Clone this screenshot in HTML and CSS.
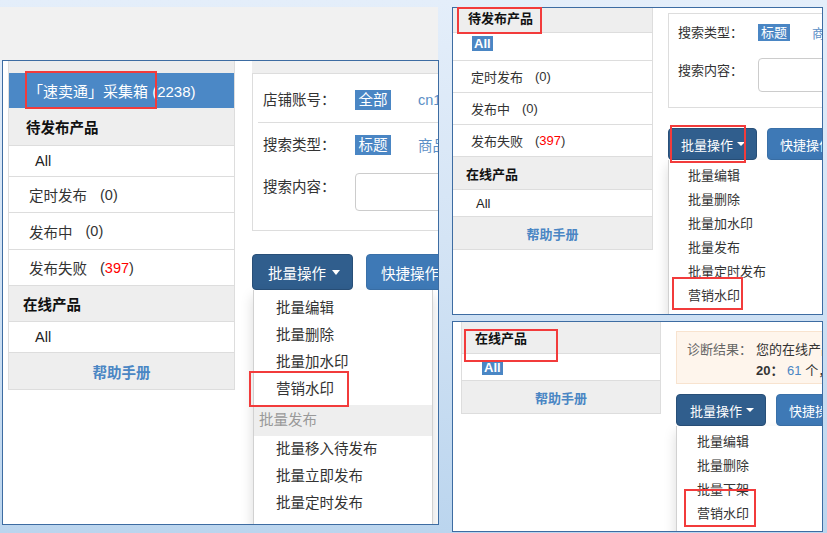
FILE: index.html
```html
<!DOCTYPE html>
<html lang="zh-CN">
<head>
<meta charset="utf-8">
<title>速卖通 采集箱 营销水印</title>
<link rel="stylesheet" href="styles.css">
</head>
<body>
<div class="a-backdrop"></div>

<section class="shot shot-a">
  <aside class="sb">
    <div class="sb-cap"></div>
    <div class="sb-row sb-active">「速卖通」采集箱 (2238)</div>
    <div class="sb-row sb-head">待发布产品</div>
    <div class="sb-row sb-all"><span class="all-txt">All</span></div>
    <div class="sb-row sb-item">定时发布<span class="cnt">(0)</span></div>
    <div class="sb-row sb-item sb-item-b">发布中<span class="cnt">(0)</span></div>
    <div class="sb-row sb-item">发布失败<span class="cnt">(<span class="red">397</span>)</span></div>
    <div class="sb-row sb-head sb-head-2">在线产品</div>
    <div class="sb-row sb-all"><span class="all-txt">All</span></div>
    <div class="sb-row sb-help">帮助手册</div>
  </aside>
  <main class="main">
    <div class="m-cap"></div>
    <div class="filter">
      <div class="f-row f-shop"><span class="f-label">店铺账号：</span><span class="tag">全部</span><span class="opt">cn1</span></div>
      <div class="f-row f-type"><span class="f-label">搜索类型：</span><span class="tag">标题</span><span class="opt">商品</span></div>
      <div class="f-row f-search"><span class="f-label">搜索内容：</span><span class="input"></span></div>
    </div>
    <div class="btns">
      <span class="btn btn-dark">批量操作<i class="caret"></i></span>
      <span class="btn btn-light">快捷操作</span>
    </div>
    <ul class="menu">
      <li>批量编辑</li>
      <li>批量删除</li>
      <li>批量加水印</li>
      <li>营销水印</li>
      <li class="menu-head">批量发布</li>
      <li>批量移入待发布</li>
      <li>批量立即发布</li>
      <li>批量定时发布</li>
    </ul>
  </main>
</section>

<section class="shot shot-b">
  <aside class="sb">
    <div class="sb-row sb-head sb-head-top">待发布产品</div>
    <div class="sb-row sb-all"><span class="all-tag">All</span></div>
    <div class="sb-row sb-item">定时发布<span class="cnt">(0)</span></div>
    <div class="sb-row sb-item">发布中<span class="cnt">(0)</span></div>
    <div class="sb-row sb-item">发布失败<span class="cnt">(<span class="red">397</span>)</span></div>
    <div class="sb-row sb-head sb-head-2">在线产品</div>
    <div class="sb-row sb-all sb-all-plain"><span class="all-txt">All</span></div>
    <div class="sb-row sb-help">帮助手册</div>
  </aside>
  <main class="main">
    <div class="filter">
      <div class="f-row f-type"><span class="f-label">搜索类型：</span><span class="tag">标题</span><span class="opt">商品</span></div>
      <div class="f-row f-search"><span class="f-label">搜索内容：</span><span class="input"></span></div>
    </div>
    <div class="btns">
      <span class="btn btn-dark">批量操作<i class="caret"></i></span>
      <span class="btn btn-light">快捷操作</span>
    </div>
    <ul class="menu">
      <li>批量编辑</li>
      <li>批量删除</li>
      <li>批量加水印</li>
      <li>批量发布</li>
      <li>批量定时发布</li>
      <li>营销水印</li>
    </ul>
  </main>
</section>

<section class="shot shot-c">
  <aside class="sb">
    <div class="sb-row sb-head">在线产品</div>
    <div class="sb-row sb-all"><span class="all-tag">All</span></div>
    <div class="sb-row sb-help">帮助手册</div>
  </aside>
  <main class="main">
    <div class="notice">
      <span class="n-label">诊断结果：</span>
      <span class="n-text">您的在线产品中，有</span>
      <span></span>
      <span class="n-text"><b>20：</b> <span class="blue">61</span> 个，</span>
    </div>
    <div class="btns">
      <span class="btn btn-dark">批量操作<i class="caret"></i></span>
      <span class="btn btn-light">快捷操作</span>
    </div>
    <ul class="menu">
      <li>批量编辑</li>
      <li>批量删除</li>
      <li>批量下架</li>
      <li>营销水印</li>
    </ul>
  </main>
</section>

<div class="mark mark-1"></div>
<div class="mark mark-2"></div>
<div class="mark mark-3"></div>
<div class="mark mark-4"></div>
<div class="mark mark-5"></div>
<div class="mark mark-6"></div>
<div class="mark mark-7"></div>
</body>
</html>
```

FILE: styles.css
```css
* { box-sizing: border-box; margin: 0; padding: 0; }
html, body { width: 827px; height: 533px; overflow: hidden; }
body {
  position: relative;
  font-family: "Liberation Sans", "Noto Sans CJK SC", sans-serif;
  color: #333;
  background: linear-gradient(180deg, #e4eefa 0%, #d4e4f5 45%, #bbd5ee 100%);
}
ul { list-style: none; }

.a-backdrop { position: absolute; left: 0; top: 7px; width: 438px; height: 53px; background: #f1f1f1; }

/* screenshot windows */
.shot {
  position: absolute;
  display: flex;
  align-items: flex-start;
  background: #fff;
  border: 1px solid #3d6ca2;
  overflow: hidden;
}
.shot-a { left: 2px; top: 60px; width: 437px; height: 465px; font-size: 14.5px; }
.shot-b { left: 452px; top: 7px; width: 371px; height: 308px; font-size: 13px; }
.shot-c { left: 452px; top: 321px; width: 371px; height: 211px; font-size: 13px; }

/* sidebar */
.sb { flex: none; display: flex; flex-direction: column; border-right: 1px solid #ddd; border-bottom: 1px solid #ddd; }
.sb-row { display: flex; align-items: center; border-bottom: 1px solid #ddd; white-space: nowrap; }
.sb-head { background: #eee; font-weight: bold; color: #111; }
.sb-item { color: #333; }
.sb-all { color: #222; }
.sb-help { justify-content: center; background: #eee; color: #4a86c4; font-weight: bold; border-bottom: none; }
.cnt { margin-left: 12px; }
.red { color: #f00; }
.blue { color: #4a86c4; }
.all-tag { background: #4a86c4; color: #fff; font-weight: bold; padding: 0 2px; }

.shot-a .sb { margin-left: 5px; width: 227px; border-left: 1px solid #ddd; }
.shot-a .sb-cap { height: 12px; background: #ececec; }
.shot-a .sb-active { height: 35px; border-bottom: none; background: #4b88c6; color: #fff; font-size: 15px; padding-left: 19px; }
.shot-a .sb-head { height: 38px; padding-left: 17px; }
.shot-a .sb-head-2 { height: 36px; padding-left: 14px; }
.shot-a .sb-all { height: 31px; padding-left: 26px; }
.shot-a .sb-item { height: 36px; padding-left: 20px; }
.shot-a .sb-item-b { height: 37px; }
.shot-a .sb-help { height: 36px; }
.shot-a .cnt { margin-left: 13px; }

.shot-b .sb { width: 200px; }
.shot-b .sb-head-top { height: 25px; padding-left: 15px; padding-bottom: 5px; }
.shot-b .sb-head-2 { height: 33px; padding-left: 13px; }
.shot-b .sb-all { height: 28px; padding-left: 19px; align-items: flex-start; padding-top: 3px; }
.shot-b .sb-all-plain { height: 27px; padding-left: 23px; align-items: center; padding-top: 0; }
.shot-b .sb-item { height: 32px; padding-left: 18px; }
.shot-b .sb-help { height: 32px; }

.shot-c .sb { margin-left: 8px; width: 200px; border-left: 1px solid #ddd; }
.shot-c .sb-head { height: 32px; padding-left: 13px; }
.shot-c .sb-all { height: 27px; padding-left: 20px; }
.shot-c .sb-help { height: 32px; }

/* main area */
.main { flex: none; width: 300px; display: flex; flex-direction: column; align-items: flex-start; }
.shot-a .main { margin-left: 17px; }
.shot-b .main, .shot-c .main { margin-left: 15px; }

.m-cap { align-self: stretch; height: 12px; background: #efefef; }

.filter { align-self: stretch; border: 1px solid #ddd; border-right: none; display: flex; flex-direction: column; }
.f-row { display: flex; align-items: center; white-space: nowrap; }
.f-label { flex: none; color: #333; }
.tag { background: #4a86c4; color: #fff; }
.opt { color: #5b8fc6; }
.input { flex: none; width: 200px; border: 1px solid #ccc; border-radius: 4px; background: #fff; }

.shot-a .filter { height: 158px; }
.shot-a .f-shop { height: 49px; margin-left: 5px; padding-left: 5px; padding-top: 3px; border-bottom: 1px solid #ddd; }
.shot-a .f-type { height: 43px; padding-left: 10px; }
.shot-a .f-search { padding-left: 10px; padding-top: 7px; align-items: flex-start; }
.shot-a .f-label { width: 92px; line-height: 20px; }
.shot-a .f-search .f-label { margin-top: 4px; }
.shot-a .tag { line-height: 20px; padding: 0 3.5px; }
.shot-a .opt { margin-left: 27px; }
.shot-a .input { height: 38px; }

.shot-b .filter { margin-top: 5px; height: 95px; }
.shot-b .f-type { height: 37px; padding-left: 9px; }
.shot-b .f-search { padding-left: 9px; padding-top: 7px; align-items: flex-start; }
.shot-b .f-label { width: 80px; line-height: 18px; }
.shot-b .f-search .f-label { margin-top: 4px; }
.shot-b .tag { line-height: 17px; padding: 0 3px; }
.shot-b .opt { margin-left: 22px; }
.shot-b .input { height: 34px; }

/* notice */
.notice {
  align-self: stretch;
  margin-top: 9px;
  height: 53px;
  background: #fef5ec;
  border: 1px solid #f8e3cf;
  border-right: none;
  padding: 9px 0 0 10px;
  display: grid;
  grid-template-columns: 69px auto;
  line-height: 17px;
  white-space: nowrap;
}
.n-label { color: #666; }
.n-text { color: #333; }
.n-text b { color: #333; }

/* buttons */
.btns { display: flex; white-space: nowrap; }
.btn { display: flex; align-items: center; color: #fff; border-radius: 4px; }
.btn-dark { background: #305e8d; border: 1px solid #284f78; }
.btn-light { background: #3e79b6; border: 1px solid #3a70a8; width: 120px; }
.caret { display: inline-block; width: 0; height: 0; border-left: 4px solid transparent; border-right: 4px solid transparent; border-top: 5px solid #fff; }

.shot-a .btns { margin-top: 23px; height: 36px; gap: 13px; }
.shot-a .btn { height: 36px; padding-left: 15px; }
.shot-a .btn-dark { width: 101px; }
.shot-a .btn-light { padding-left: 14px; }
.shot-a .caret { margin-left: 6px; border-left-width: 4.5px; border-right-width: 4.5px; }

.shot-b .btns { margin-top: 20px; height: 32px; gap: 10px; }
.shot-c .btns { margin-top: 10px; height: 32px; gap: 10px; }
.shot-b .btn, .shot-c .btn { height: 32px; padding-left: 12px; }
.shot-b .btn-dark { width: 89px; }
.shot-c .btn-dark { width: 90px; padding-left: 13px; }
.shot-b .caret, .shot-c .caret { margin-left: 4px; border-top-width: 4.5px; }

/* dropdown */
.menu {
  background: #fff;
  border: 1px solid rgba(0, 0, 0, 0.18);
  border-top: none;
  box-shadow: 0 6px 12px rgba(0, 0, 0, 0.15);
  white-space: nowrap;
  color: #333;
}
.shot-a .menu { margin-left: 1px; width: 180px; padding-top: 5px; height: 260px; }
.shot-a .menu li { line-height: 27px; padding-left: 22px; }
.shot-a .menu .menu-head { margin-top: 2px; line-height: 31px; padding-left: 5px; background: #eee; color: #999; }
.shot-b .menu, .shot-c .menu { width: 170px; padding-top: 4px; height: 200px; }
.shot-b .menu li { line-height: 24px; padding-left: 19px; }
.shot-c .menu li { line-height: 24px; padding-left: 20px; }

/* red annotation boxes */
.mark { position: absolute; border: 2px solid #f23b3b; pointer-events: none; }
.mark-1 { left: 25px; top: 71px; width: 132px; height: 38px; }
.mark-2 { left: 249px; top: 371px; width: 100px; height: 36px; }
.mark-3 { left: 457px; top: 7px; width: 85px; height: 27px; }
.mark-4 { left: 670px; top: 125px; width: 76px; height: 38px; }
.mark-5 { left: 672px; top: 277px; width: 71px; height: 33px; }
.mark-6 { left: 464px; top: 329px; width: 94px; height: 33px; }
.mark-7 { left: 684px; top: 489px; width: 72px; height: 38px; }
```
